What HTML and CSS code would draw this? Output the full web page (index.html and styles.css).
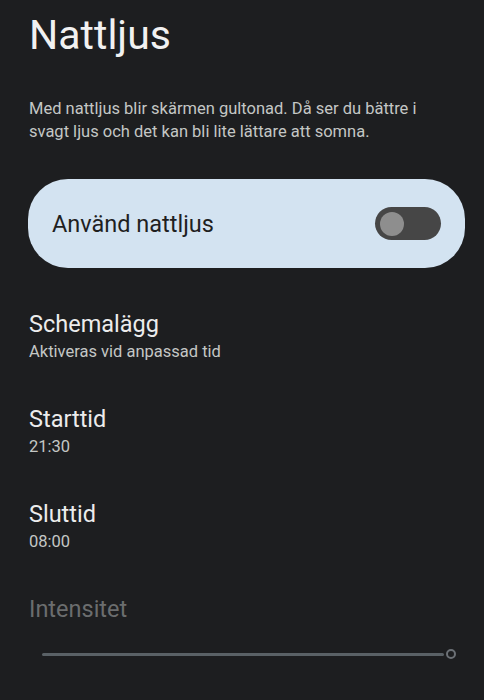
FILE: index.html
```html
<!DOCTYPE html>
<html lang="sv">
<head>
<meta charset="utf-8">
<title>Nattljus</title>
<link rel="stylesheet" href="styles.css">
</head>
<body>
<main class="page">
  <h1 class="title">Nattljus</h1>
  <p class="desc">Med nattljus blir skärmen gultonad. Då ser du bättre i svagt ljus och det kan bli lite lättare att somna.</p>
  <div class="main-switch">
    <span class="main-label">Använd nattljus</span>
    <span class="toggle"><span class="thumb"></span></span>
  </div>
  <div class="item">
    <div class="item-title">Schemalägg</div>
    <div class="item-sub">Aktiveras vid anpassad tid</div>
  </div>
  <div class="item">
    <div class="item-title">Starttid</div>
    <div class="item-sub">21:30</div>
  </div>
  <div class="item">
    <div class="item-title">Sluttid</div>
    <div class="item-sub">08:00</div>
  </div>
  <div class="item disabled">
    <div class="item-title">Intensitet</div>
  </div>
  <div class="slider">
    <span class="track"></span>
    <span class="knob"></span>
  </div>
</main>
</body>
</html>
```
FILE: styles.css
```css
html, body {
  margin: 0;
  padding: 0;
  background: #1d1e20;
}
body {
  font-family: Roboto, "Noto Sans", sans-serif;
  color: #e3e3e3;
}
.page {
  padding: 0 19px 0 29px;
  display: flex;
  flex-direction: column;
}
.title {
  margin: 11px 0 0;
  font-size: 41px;
  font-weight: 400;
  line-height: 48px;
  color: #f1f1f1;
}
.desc {
  margin: 38px 0 0;
  font-size: 16.5px;
  line-height: 23px;
  color: #c4c7c5;
  padding-right: 20px;
}
.main-switch {
  margin: 36px 0 0 -1px;
  height: 89px;
  border-radius: 40px;
  background: #d3e3f1;
  display: flex;
  align-items: center;
  justify-content: space-between;
  padding: 0 24px 0 24px;
}
.main-label {
  font-size: 23.5px;
  color: #1f1f1f;
}
.toggle {
  width: 66px;
  height: 33px;
  border-radius: 17px;
  background: #464646;
  display: flex;
  align-items: center;
  padding-left: 5px;
  box-sizing: border-box;
}
.thumb {
  width: 24px;
  height: 24px;
  border-radius: 50%;
  background: #8e8e8e;
}
.item {
  display: flex;
  flex-direction: column;
  margin-top: 39px;
}
.main-switch + .item {
  margin-top: 40px;
}
.item-title {
  font-size: 23.5px;
  line-height: 32px;
  color: #ececec;
}
.item-sub {
  font-size: 16.5px;
  line-height: 24px;
  color: #c4c7c5;
}
.disabled .item-title {
  color: #6b6d6e;
}
.slider {
  margin: 24px 0 0 13px;
  display: flex;
  align-items: center;
  width: 414px;
}
.track {
  flex: 1;
  height: 3px;
  border-radius: 2px;
  background: #5a6166;
}
.knob {
  width: 6px;
  height: 6px;
  border: 2px solid #6c7176;
  border-radius: 50%;
  margin-left: 2px;
}
```
